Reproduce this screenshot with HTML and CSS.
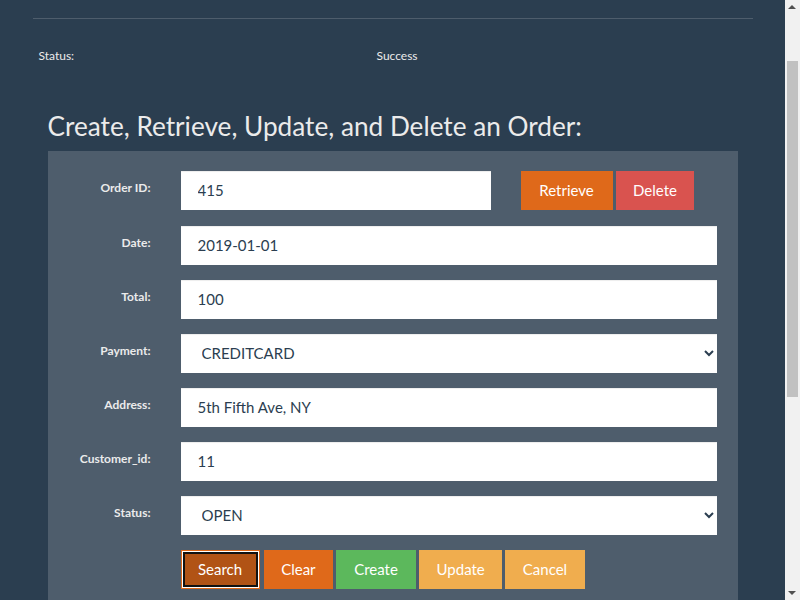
FILE: index.html
```html
<!DOCTYPE html>
<html lang="en">
<head>
<meta charset="utf-8">
<title>Orders</title>
<link rel="stylesheet" href="styles.css">
</head>
<body>
<div class="page">
  <div class="container">
    <hr class="divider">
    <div class="status-row">
      <span class="status-label">Status:</span>
      <span class="status-value">Success</span>
    </div>
    <h3 class="section-title">Create, Retrieve, Update, and Delete an Order:</h3>
    <form class="well">
      <label class="lbl lbl-first" for="order_id">Order ID:</label>
      <div class="id-row">
        <input class="field id-field" id="order_id" type="text" value="415">
        <div class="btn-group">
          <button type="button" class="btn btn-primary btn-retrieve">Retrieve</button>
          <button type="button" class="btn btn-danger">Delete</button>
        </div>
      </div>

      <label class="lbl" for="date">Date:</label>
      <input class="field" id="date" type="text" value="2019-01-01">

      <label class="lbl" for="total">Total:</label>
      <input class="field" id="total" type="text" value="100">

      <label class="lbl" for="payment">Payment:</label>
      <select class="field" id="payment">
        <option>CREDITCARD</option>
        <option>DEBITCARD</option>
        <option>PAYPAL</option>
      </select>

      <label class="lbl" for="address">Address:</label>
      <input class="field" id="address" type="text" value="5th Fifth Ave, NY">

      <label class="lbl" for="customer_id">Customer_id:</label>
      <input class="field" id="customer_id" type="text" value="11">

      <label class="lbl" for="status">Status:</label>
      <select class="field" id="status">
        <option>OPEN</option>
        <option>SHIPPED</option>
        <option>DELIVERED</option>
      </select>

      <div class="actions">
        <button type="button" class="btn btn-primary btn-focused">Search</button>
        <button type="button" class="btn btn-primary">Clear</button>
        <button type="button" class="btn btn-success btn-create">Create</button>
        <button type="button" class="btn btn-warning">Update</button>
        <button type="button" class="btn btn-warning">Cancel</button>
      </div>
    </form>
  </div>
</div>
<div class="scrollbar" aria-hidden="true">
  <span class="sb-arrow sb-up"></span>
  <span class="sb-thumb"></span>
  <span class="sb-arrow sb-down"></span>
</div>
</body>
</html>
```

FILE: styles.css
```css
html, body {
  margin: 0;
  padding: 0;
}

body {
  background: #2b3e50;
  color: #ebebeb;
  font-family: Lato, "Open Sans", sans-serif;
  font-size: 15px;
  overflow: hidden;
}

.page {
  margin-right: 15px;
  padding-top: 18px;
}

.container {
  width: 720px;
  margin: 0 auto;
}

.divider {
  margin: 0;
  border: 0;
  border-top: 1px solid #4e5d6c;
  height: 0;
}

.status-row {
  display: flex;
  padding-top: 29px;
  font-size: 12px;
  line-height: 16px;
}

.status-label {
  width: 338px;
  padding-left: 6px;
}

.section-title {
  margin: 48px 0 10px 15px;
  font-size: 26.2px;
  font-weight: 400;
  line-height: 28.6px;
}

.well {
  margin: 0 15px;
  background: #4e5d6c;
  padding: 20px 21px 40px 19px;
  display: grid;
  grid-template-columns: 84px 1fr;
  column-gap: 30px;
  row-gap: 15px;
}

.lbl {
  text-align: right;
  font-size: 12px;
  font-weight: 700;
  line-height: 16px;
  padding-top: 9px;
}

.field {
  box-sizing: border-box;
  height: 39px;
  width: 100%;
  margin: 0;
  border: 0;
  border-radius: 0;
  background: #fff;
  color: #2b3e50;
  font-family: Lato, "Open Sans", sans-serif;
  font-size: 15px;
  padding: 8px 17px;
  box-shadow: inset 0 1px 1px rgba(0, 0, 0, 0.075);
  outline: none;
}

.id-row {
  display: flex;
  column-gap: 30px;
  height: 40px;
}

.id-field {
  width: 310px;
  flex: none;
}

.btn-group {
  display: flex;
  gap: 3px;
  height: 39px;
}

.actions {
  grid-column: 2;
  display: flex;
  gap: 3px;
}

.btn {
  box-sizing: border-box;
  height: 39px;
  margin: 0;
  padding: 0 16.5px;
  border: 1px solid transparent;
  border-radius: 0;
  color: #fff;
  font-family: Lato, "Open Sans", sans-serif;
  font-size: 15px;
  line-height: 20px;
  cursor: pointer;
}

.btn-retrieve {
  min-width: 92px;
}

.btn-create {
  min-width: 80px;
}

.btn-primary {
  background: #df691a;
  border-color: #df691a;
}

.btn-danger {
  background: #d9534f;
  border-color: #d9534f;
}

.btn-success {
  background: #5cb85c;
  border-color: #5cb85c;
}

.btn-warning {
  background: #f0ad4e;
  border-color: #f0ad4e;
}

.btn-focused {
  background: #b15315;
  border-color: #df691a;
  box-shadow: inset 0 0 0 2px #fff;
  outline: 2px solid #111;
  outline-offset: -4px;
  margin-right: 1px;
}

/* fake browser scrollbar (the reference is scrolled) */
.scrollbar {
  position: fixed;
  top: 0;
  right: 0;
  width: 15px;
  height: 100%;
  background: #f1f1f1;
}

.sb-thumb {
  position: absolute;
  left: 2px;
  top: 61px;
  width: 11px;
  height: 336px;
  background: #c1c1c1;
}

.sb-arrow {
  position: absolute;
  left: 3px;
  width: 0;
  height: 0;
  border-left: 4px solid transparent;
  border-right: 4px solid transparent;
}

.sb-up {
  top: 5px;
  border-bottom: 4px solid #505050;
}

.sb-down {
  bottom: 5px;
  border-top: 4px solid #505050;
}
```
